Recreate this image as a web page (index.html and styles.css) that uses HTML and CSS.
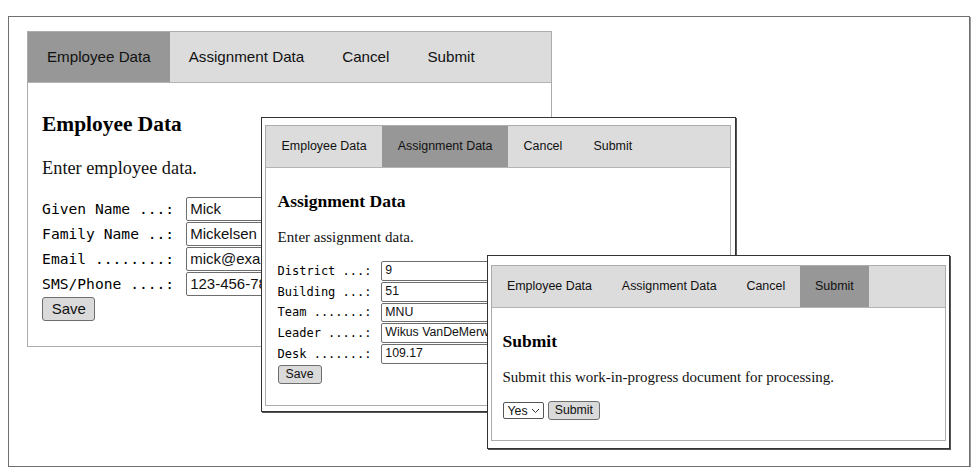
FILE: index.html
```html
<!DOCTYPE html>
<html>
<head>
<meta charset="utf-8">
<title>Tabbed forms</title>
<link rel="stylesheet" href="styles.css">
</head>
<body>
<div class="frame">
  <section class="win win-main">
    <nav class="tabs">
      <span class="tab active">Employee Data</span>
      <span class="tab">Assignment Data</span>
      <span class="tab">Cancel</span>
      <span class="tab">Submit</span>
    </nav>
    <div class="content">
      <h3>Employee Data</h3>
      <p>Enter employee data.</p>
      <div class="form">
        <label class="lbl">Given Name ...:</label><span class="input">Mick</span>
        <label class="lbl">Family Name ..:</label><span class="input">Mickelsen</span>
        <label class="lbl">Email ........:</label><span class="input">mick@example.com</span>
        <label class="lbl">SMS/Phone ....:</label><span class="input">123-456-7890</span>
      </div>
      <span class="btn">Save</span>
    </div>
  </section>

  <div class="popup popup-assign">
    <section class="win win-small">
      <nav class="tabs">
        <span class="tab">Employee Data</span>
        <span class="tab active">Assignment Data</span>
        <span class="tab">Cancel</span>
        <span class="tab">Submit</span>
      </nav>
      <div class="content">
        <h3>Assignment Data</h3>
        <p>Enter assignment data.</p>
        <div class="form">
          <label class="lbl">District ...:</label><span class="input">9</span>
          <label class="lbl">Building ...:</label><span class="input">51</span>
          <label class="lbl">Team .......:</label><span class="input">MNU</span>
          <label class="lbl">Leader .....:</label><span class="input">Wikus VanDeMerwe</span>
          <label class="lbl">Desk .......:</label><span class="input">109.17</span>
        </div>
        <span class="btn">Save</span>
      </div>
    </section>
  </div>

  <div class="popup popup-submit">
    <section class="win win-small">
      <nav class="tabs">
        <span class="tab">Employee Data</span>
        <span class="tab">Assignment Data</span>
        <span class="tab">Cancel</span>
        <span class="tab active">Submit</span>
      </nav>
      <div class="content">
        <h3>Submit</h3>
        <p>Submit this work-in-progress document for processing.</p>
        <div class="actions">
          <span class="select">Yes<svg class="chev" width="9" height="6" viewBox="0 0 9 6"><polyline points="1,1 4.5,4.5 8,1" fill="none" stroke="#333" stroke-width="1"/></svg></span>
          <span class="btn btn-submit">Submit</span>
        </div>
      </div>
    </section>
  </div>
</div>
</body>
</html>
```

FILE: styles.css
```css
html, body {
  margin: 0;
  padding: 0;
  background: #fff;
}

.frame {
  position: relative;
  box-sizing: border-box;
  margin: 16px 0 0 8px;
  width: 962px;
  height: 451px;
  border: 1px solid #6f6f6f;
  box-shadow: 1px 1px 0 #9a9a9a;
  padding: 14px 18px;
}

.win {
  box-sizing: border-box;
  border: 1px solid #acacac;
  background: #fff;
  color: #111;
  font-family: "Liberation Serif", "Times New Roman", serif;
}

.win-main {
  width: 525px;
  font-size: 18.3px;
}

.win-small {
  font-size: 15px;
}

.tabs {
  display: flex;
  background: #dcdcdc;
  border-bottom: 1px solid #b4b4b4;
}

.tab {
  font-family: "Liberation Sans", Arial, sans-serif;
  font-size: 0.83em;
  height: 3.29em;
  line-height: 3.29em;
  padding: 0 1.25em;
  color: #111;
  white-space: nowrap;
}

.tab.active {
  background: #979797;
}

.content {
  padding: 1.56em 0.77em 1.38em;
}

h3 {
  font-size: 1.17em;
  line-height: 1.15;
  margin: 0 0 1em;
  font-weight: bold;
  color: #000;
}

p {
  margin: 0 0 1em;
  line-height: 1.15;
}

.form {
  display: grid;
  grid-template-columns: max-content max-content;
  column-gap: 0.656em;
  row-gap: 1px;
  align-items: center;
}

.lbl {
  font-family: "DejaVu Sans Mono", monospace;
  font-size: 0.8em;
  white-space: pre;
  color: #000;
}

.input {
  box-sizing: border-box;
  display: block;
  font-family: "Liberation Sans", Arial, sans-serif;
  font-size: 0.82em;
  height: 1.6em;
  line-height: calc(1.6em - 2px);
  padding: 0 3px;
  border: 1px solid #6e6e6e;
  border-radius: 2px;
  background: #fff;
  white-space: nowrap;
  overflow: hidden;
  color: #111;
}

.win-main .input {
  width: 77px;
}

.popup-assign .input {
  width: 108px;
}

.btn {
  box-sizing: border-box;
  display: inline-block;
  font-family: "Liberation Sans", Arial, sans-serif;
  font-size: 0.82em;
  height: 1.6em;
  line-height: calc(1.6em - 2px);
  padding: 0 0.57em;
  margin-top: 1px;
  border: 1px solid #6e6e6e;
  border-radius: 3px;
  background: #dadada;
  color: #111;
}

.popup {
  position: absolute;
  box-sizing: border-box;
  background: #fff;
  border: 1px solid #333;
  box-shadow: 1px 1px 0 #555;
}

.popup-assign {
  left: 252px;
  top: 100px;
  width: 475px;
  padding: 7px 4px 5px 3px;
}

.popup-submit {
  left: 478px;
  top: 238px;
  width: 463px;
  padding: 9px 3px 7px 3px;
}

.popup-submit .tab {
  padding: 0 1.2em;
}

.popup-submit .content {
  padding-left: 0.7em;
  padding-bottom: 1.3em;
}

.actions {
  display: flex;
  align-items: center;
  gap: 4px;
}

.select {
  box-sizing: border-box;
  display: inline-flex;
  align-items: center;
  gap: 3px;
  font-family: "Liberation Sans", Arial, sans-serif;
  font-size: 0.82em;
  height: 1.4em;
  padding: 0 3px 0 4px;
  border: 1px solid #555;
  border-radius: 2px;
  background: #fff;
  color: #111;
}

.chev {
  display: block;
  margin-top: 1px;
}

.btn-submit {
  margin-top: 0;
  height: 1.55em;
  line-height: calc(1.55em - 2px);
  padding: 0 0.5em;
}
```
